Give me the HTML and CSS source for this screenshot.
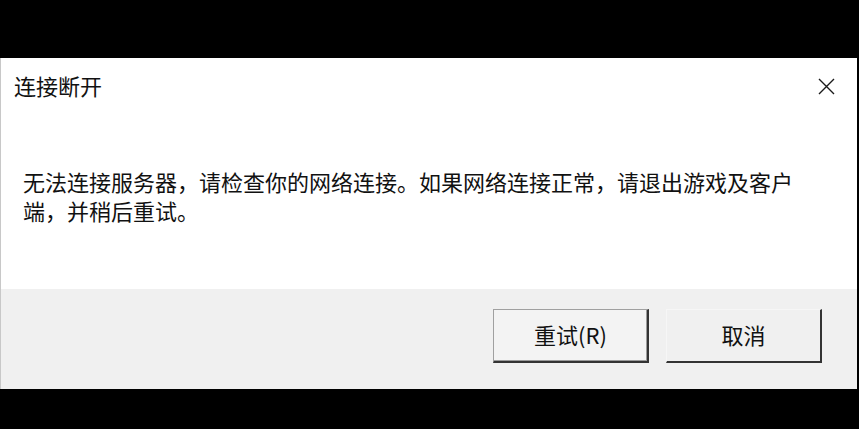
FILE: index.html
```html
<!DOCTYPE html>
<html lang="zh-CN">
<head>
<meta charset="utf-8">
<title>连接断开</title>
<link rel="stylesheet" href="styles.css">
</head>
<body>
<div class="dialog">
  <div class="main">
    <div class="titlebar">
      <div class="title">连接断开</div>
      <div class="close" aria-label="关闭">
        <svg width="17" height="17" viewBox="0 0 17 17"><path d="M1 1 L16 16 M16 1 L1 16" stroke="#1a1a1a" stroke-width="1.4" fill="none"/></svg>
      </div>
    </div>
    <div class="message">无法连接服务器，请检查你的网络连接。如果网络连接正常，请退出游戏及客户端，并稍后重试。</div>
  </div>
  <div class="footer">
    <button class="btn btn-default">重试(R)</button>
    <button class="btn btn-cancel">取消</button>
  </div>
</div>
</body>
</html>
```
FILE: styles.css
```css
html, body {
  margin: 0;
  padding: 0;
  background: #000;
}
body {
  width: 859px;
  height: 429px;
  overflow: hidden;
  padding-top: 58px;
  box-sizing: border-box;
  font-family: "Noto Sans CJK SC", "Noto Sans", sans-serif;
  color: #111;
}
.dialog {
  width: 857px;
  height: 331px;
  background: #fff;
  border-left: 1px solid #c8c8c8;
  box-sizing: border-box;
  display: flex;
  flex-direction: column;
}
.main {
  height: 231px;
  display: flex;
  flex-direction: column;
}
.titlebar {
  display: flex;
  justify-content: space-between;
  align-items: flex-start;
  padding: 14px 22px 0 13px;
}
.title {
  font-size: 22px;
  line-height: 26px;
}
.close {
  width: 17px;
  height: 17px;
  margin-top: 6px;
}
.close svg { display: block; }
.message {
  margin-top: 69px;
  padding-left: 22px;
  padding-right: 50px;
  font-size: 22px;
  line-height: 29px;
}
.footer {
  flex: 1;
  background: #f0f0f0;
  display: flex;
  justify-content: flex-end;
  align-items: flex-start;
  padding: 20px 35px 0 0;
  gap: 17px;
}
.btn {
  font-family: "Noto Sans CJK SC", "Noto Sans", sans-serif;
  font-size: 22px;
  color: #111;
  width: 156px;
  height: 54px;
  padding: 0 0 3px 0;
  box-sizing: border-box;
  background: #f3f3f3;
  line-height: 1;
}
.btn-default {
  border: 1px solid #a0a0a0;
  border-right: 2px solid #333;
  border-bottom: 2px solid #333;
  box-shadow: inset -1px -1px 0 #9a9a9a;
}
.btn-cancel {
  border: 1px solid #f6f6f6;
  border-right: 2px solid #333;
  border-bottom: 2px solid #333;
  background: #f0f0f0;
}
```
